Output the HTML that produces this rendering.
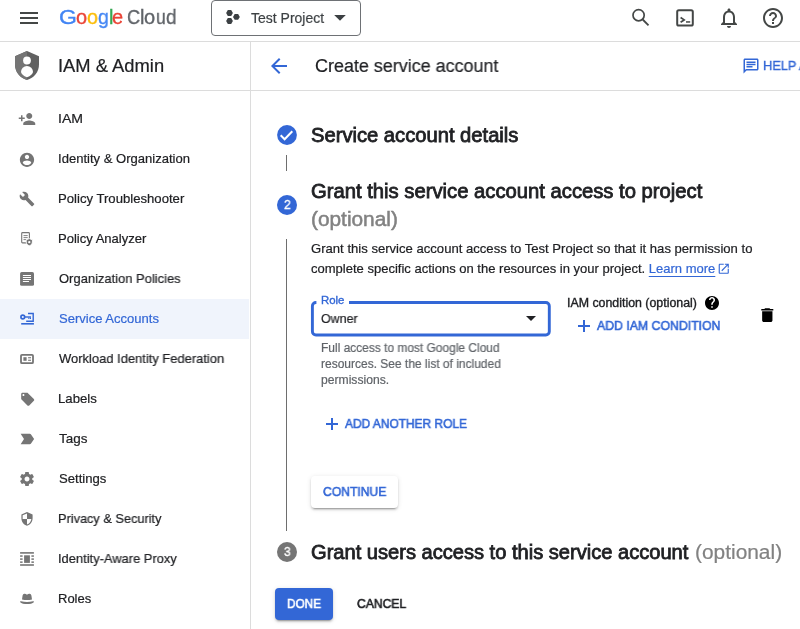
<!DOCTYPE html>
<html>
<head>
<meta charset="utf-8">
<title>Create service account</title>
<style>
*{box-sizing:border-box;margin:0;padding:0}
html,body{width:800px;height:629px;overflow:hidden;background:#fff}
body{font-family:"Liberation Sans",sans-serif;color:#202124;position:relative;font-size:14px}
.abs{position:absolute}
.t{position:absolute;white-space:nowrap;line-height:1;transform-origin:0 0;will-change:transform}
.lt{-webkit-text-stroke:0.2px currentColor}
.med{-webkit-text-stroke:0.35px currentColor}
.btn{-webkit-text-stroke:0.6px currentColor}
.hd{-webkit-text-stroke:0.8px currentColor}
.hd2{-webkit-text-stroke:0.5px currentColor}
#topbar{position:absolute;left:0;top:0;width:800px;height:42px;border-bottom:1px solid #dcdcdc;background:#fff}
#sidebar{position:absolute;left:0;top:42px;width:251px;height:587px;border-right:1px solid #dcdcdc;background:#fff}
#sidehead{position:absolute;left:0;top:0;width:250px;height:49px;border-bottom:1px solid #dcdcdc}
#mainhead{position:absolute;left:251px;top:42px;width:549px;height:49px;border-bottom:1px solid #dcdcdc}
.nav{position:absolute;left:0;width:249px;height:40px}
.nav svg{position:absolute;left:18px;top:11px;width:18px;height:18px;fill:#757575;overflow:visible}
.nav.sel{background:#f0f4fc}
.nav.sel svg{fill:#3367d6}
</style>
</head>
<body>

<!-- TOP BAR -->
<div id="topbar">
  <svg class="abs" style="left:17px;top:6px;width:24px;height:24px" viewBox="0 0 24 24"><path fill="#444746" d="M3 18h18v-2H3v2zm0-5h18v-2H3v2zm0-7v2h18V6H3z"/></svg>
  <div class="abs" style="left:211px;top:0;width:150px;height:36px;border:1px solid #6e7175;border-radius:4px"></div>

  <svg class="abs" style="left:221px;top:9px;width:20px;height:16px" viewBox="221 9 20 16"><g fill="#3c4043"><path d="M226.100 13l1.700-2.900h3.400l1.700 2.900-1.700 2.900h-3.400z"/><path d="M233 16.900l1.700-2.900h3.400l1.700 2.900-1.700 2.900h-3.400z"/><path d="M226.100 21l1.700-2.900h3.400l1.700 2.900-1.700 2.900h-3.400z"/></g></svg>
  <svg class="abs" style="left:334px;top:15px;width:12px;height:6px" viewBox="0 0 12 6"><path d="M0.200 0h11.600L6 5.800z" fill="#3c4043"/></svg>
  <svg class="abs" style="left:629px;top:6px;width:24px;height:24px" viewBox="0 0 24 24"><circle cx="9.600" cy="9.200" r="5.600" fill="none" stroke="#444746" stroke-width="1.700"/><path d="M13.700 13.500l5.800 5.800" stroke="#444746" stroke-width="1.800" fill="none"/></svg>
  <svg class="abs" style="left:673px;top:6px;width:24px;height:24px" viewBox="0 0 24 24"><rect x="4.200" y="4.200" width="15.600" height="15.400" rx="1.600" fill="none" stroke="#444746" stroke-width="2"/><path d="M7.600 11.500l3.600 2.400-3.600 2.400" fill="none" stroke="#444746" stroke-width="1.700"/><path d="M13 15.200h4.200v1.500H13z" fill="#444746"/></svg>
  <svg class="abs" style="left:717px;top:6px;width:24px;height:24px" viewBox="0 0 24 24"><path fill="#444746" d="M12 22c1.100 0 2-.9 2-2h-4c0 1.100.9 2 2 2zm6-6v-5c0-3.070-1.630-5.640-4.500-6.320V4c0-.830-.670-1.500-1.500-1.500s-1.500.670-1.500 1.500v.680C7.640 5.360 6 7.920 6 11v5l-2 2v1h16v-1l-2-2zm-2 1H8v-6c0-2.480 1.510-4.500 4-4.500s4 2.020 4 4.500v6z"/></svg>
  <svg class="abs" style="left:761px;top:6px;width:24px;height:24px" viewBox="0 0 24 24"><path fill="#444746" d="M11 18h2v-2h-2v2zm1-16C6.480 2 2 6.480 2 12s4.480 10 10 10 10-4.480 10-10S17.520 2 12 2zm0 18c-4.410 0-8-3.590-8-8s3.590-8 8-8 8 3.590 8 8-3.590 8-8 8zm0-14c-2.210 0-4 1.790-4 4h2c0-1.100.9-2 2-2s2 .9 2 2c0 2-3 1.750-3 5h2c0-2.250 3-2.500 3-5 0-2.210-1.790-4-4-4z"/></svg>
</div>

<!-- SIDEBAR -->
<div id="sidebar">
  <div id="sidehead">
    <svg class="abs" style="left:15px;top:9px;width:24px;height:29px" viewBox="0 0 24 29"><defs><clipPath id="shl"><rect x="0" y="0" width="12" height="29"/></clipPath></defs><path id="shp" d="M12 0L24 5.300V13.500C24 21 19 27 12 29 5 27 0 21 0 13.500V5.300z" fill="#616161"/><path d="M12 0L24 5.300V13.500C24 21 19 27 12 29 5 27 0 21 0 13.500V5.300z" fill="#757575" clip-path="url(#shl)"/><circle cx="12" cy="9.500" r="3.900" fill="#fff"/><path d="M6 21a6 6 0 0 1 12 0c0 1.700-2.500 4-6 5.300-3.500-1.300-6-3.600-6-5.300z" fill="#fff"/></svg>
  </div>
  <div class="nav" style="top:57px"><svg viewBox="0 0 24 24"><path d="M15 12c2.21 0 4-1.79 4-4s-1.790-4-4-4-4 1.790-4 4 1.790 4 4 4zm-9-2V7H4v3H1v2h3v3h2v-3h3v-2H6zm9 4c-2.670 0-8 1.340-8 4v2h16v-2c0-2.660-5.330-4-8-4z"/></svg></div>
  <div class="nav" style="top:97px"><svg viewBox="0 0 24 24"><g transform="translate(12.00 13.07) scale(0.95) translate(-12 -12)"><path d="M12 2C6.480 2 2 6.480 2 12s4.480 10 10 10 10-4.480 10-10S17.520 2 12 2zm0 3c1.660 0 3 1.340 3 3s-1.340 3-3 3-3-1.340-3-3 1.340-3 3-3zm0 14.200c-2.500 0-4.710-1.280-6-3.220.030-1.990 4-3.080 6-3.080 1.990 0 5.970 1.090 6 3.080-1.290 1.940-3.500 3.220-6 3.220z"/></g></svg></div>
  <div class="nav" style="top:137px"><svg viewBox="0 0 24 24"><g transform="translate(12.00 12.00) scale(0.89) translate(-12 -12)"><path d="M22.700 19l-9.100-9.100c.9-2.300.4-5-1.500-6.900-2-2-5-2.400-7.400-1.300L9 6 6 9 1.600 4.700C.4 7.100.9 10.100 2.900 12.100c1.900 1.900 4.600 2.400 6.900 1.500l9.100 9.100c.4.400 1 .400 1.400 0l2.300-2.300c.5-.4.500-1.100.1-1.400z"/></g></svg></div>
  <div class="nav" style="top:177px"><svg viewBox="18 230 18 18"><rect x="21.700" y="232.6" width="7.700" height="10.300" rx="0.800" fill="none" stroke="#757575" stroke-width="1.100"/>
<path d="M23.500 235.6h4.200M23.500 237.6h4.200M23.500 239.6h2.600" stroke="#757575" stroke-width="0.900" fill="none"/>
<path d="M29.300 238.6l3.100 1.200v2.200c0 1.800-1.300 3.200-3.100 3.800-1.800-.6-3.100-2-3.100-3.800v-2.200z" fill="#757575" stroke="#fff" stroke-width="0.900"/>
<circle cx="29.300" cy="242.2" r="1.150" fill="#fff"/></svg></div>
  <div class="nav" style="top:217px"><svg viewBox="18 270 18 18"><rect x="20.100" y="272.1" width="13.900" height="13.700" rx="1.600"/>
<path d="M22.900 275.5H31M22.900 277.5H31M22.900 279.5H31M22.900 281.5H29" stroke="#fff" stroke-width="1.050" fill="none"/></svg></div>
  <div class="nav sel" style="top:257px"><svg viewBox="18 310 18 18"><g fill="#3367d6"><path fill-rule="evenodd" d="M22.800 314.3a2.700 2.700 0 1 0 0 5.400 2.700 2.700 0 0 0 0-5.400zm0 1.650a1.050 1.050 0 1 1 0 2.100 1.050 1.050 0 0 1 0-2.100z"/>
<rect x="25" y="316.3" width="6" height="1.400"/><rect x="28.300" y="317.6" width="1.100" height="1.400"/><rect x="29.900" y="317.6" width="1.100" height="1.400"/>
<path d="M28 313.5H33.200V321.3H26.200" fill="none" stroke="#3367d6" stroke-width="1.400"/>
<rect x="21.200" y="323" width="12.700" height="1.600"/></g></svg></div>
  <div class="nav" style="top:297px"><svg viewBox="18 350 18 18"><rect x="21" y="354.8" width="12" height="8.400" rx="1" fill="none" stroke="#757575" stroke-width="1.800"/>
<rect x="23.400" y="357.2" width="3.200" height="3.600"/><rect x="28.100" y="357.2" width="2.900" height="1.100"/><rect x="28.100" y="359.7" width="2.900" height="1.100"/></svg></div>
  <div class="nav" style="top:337px"><svg viewBox="0 0 24 24"><g transform="translate(12.93 12.40) scale(0.87) translate(-12 -12)"><path d="M21.410 11.580l-9-9C12.050 2.220 11.550 2 11 2H4c-1.100 0-2 .9-2 2v7c0 .550.220 1.050.590 1.420l9 9c.360.360.860.580 1.410.580s1.050-.220 1.410-.590l7-7c.370-.360.590-.860.590-1.410s-.230-1.060-.590-1.420zM5.500 7C4.670 7 4 6.330 4 5.500S4.670 4 5.500 4 7 4.670 7 5.500 6.330 7 5.500 7z"/></g></svg></div>
  <div class="nav" style="top:377px"><svg viewBox="0 0 24 24"><path d="M3.500 5h12.200c.7 0 1.300.35 1.650.85L21.500 12l-4.150 6.150c-.35.500-.950.850-1.650.850H3.500L8 12 3.500 5z"/></svg></div>
  <div class="nav" style="top:417px"><svg viewBox="0 0 24 24"><g transform="translate(12.00 12.00) scale(0.94) translate(-12 -12)"><path d="M19.430 12.980c.040-.320.070-.640.070-.980s-.030-.660-.070-.980l2.110-1.650c.190-.150.240-.420.120-.640l-2-3.460c-.120-.220-.390-.300-.610-.220l-2.490 1c-.520-.400-1.080-.730-1.690-.980l-.380-2.650C14.460 2.180 14.250 2 14 2h-4c-.250 0-.460.180-.490.420l-.380 2.650c-.610.250-1.170.590-1.690.980l-2.490-1c-.230-.090-.490 0-.610.220l-2 3.460c-.130.220-.070.490.120.640l2.110 1.650c-.040.320-.070.650-.070.980s.030.660.070.980l-2.110 1.650c-.190.150-.240.420-.120.640l2 3.460c.120.220.390.300.610.220l2.490-1c.520.400 1.080.730 1.690.980l.380 2.650c.030.240.240.420.490.420h4c.250 0 .460-.180.490-.420l.380-2.650c.610-.250 1.170-.590 1.690-.980l2.490 1c.230.090.490 0 .610-.220l2-3.460c.120-.220.070-.490-.120-.640l-2.110-1.650zM12 15.500c-1.930 0-3.500-1.570-3.500-3.500s1.570-3.500 3.500-3.500 3.500 1.570 3.500 3.500-1.570 3.500-3.500 3.500z"/></g></svg></div>
  <div class="nav" style="top:457px"><svg viewBox="0 0 24 24"><g transform="translate(12.00 11.87) scale(0.83) translate(-12 -12)"><path d="M12 1L3 5v6c0 5.550 3.840 10.740 9 12 5.160-1.260 9-6.450 9-12V5l-9-4zm0 10.990h7c-.530 4.120-3.280 7.790-7 8.940V12H5V6.300l7-3.110v8.800z"/></g></svg></div>
  <div class="nav" style="top:497px"><svg viewBox="18 550 18 18"><rect x="20.100" y="552.1" width="13.800" height="1.600"/><rect x="20.100" y="564.2" width="13.800" height="1.600"/>
<rect x="24.100" y="555.3" width="5.800" height="7.600"/><rect x="20.1" y="555.3" width="2.500" height="1.500"/><rect x="20.1" y="558.35" width="2.500" height="1.500"/><rect x="20.1" y="561.4" width="2.500" height="1.500"/><rect x="31.4" y="555.3" width="2.500" height="1.500"/><rect x="31.4" y="558.35" width="2.500" height="1.500"/><rect x="31.4" y="561.4" width="2.500" height="1.500"/></svg></div>
  <div class="nav" style="top:537px"><svg viewBox="18 590 18 18"><path d="M22 599.4L22.600 595.5Q23 593.6 24.600 593.8Q26 594 27 594.8Q28 594 29.400 593.8Q31 593.6 31.400 595.5L32 599.4Q27 600.4 22 599.4Z"/>
<path d="M20 601.8Q20 600.9 21 601.2Q27 602.6 33 601.2Q34 600.9 34 601.8Q34 603 31 603.7Q27 604.5 23 603.7Q20 603 20 601.8Z"/></svg></div>
</div>

<!-- MAIN HEADER -->
<div id="mainhead">
  <svg class="abs" style="left:16px;top:12px;width:24px;height:24px" viewBox="0 0 24 24"><path fill="#3367d6" d="M20 11H7.830l5.590-5.590L12 4l-8 8 8 8 1.410-1.410L7.830 13H20v-2z"/></svg>
  <svg class="abs" style="left:491px;top:15px;width:18px;height:18px" viewBox="0 0 24 24"><path fill="#3367d6" d="M4 4h16v12H5.170L4 17.170V4m0-2c-1.100 0-1.990.9-1.990 2L2 22l4-4h14c1.100 0 2-.9 2-2V4c0-1.100-.9-2-2-2H4zm2 10h8v2H6v-2zm0-3h12v2H6V9zm0-3h12v2H6V6z"/></svg>
</div>


<!-- MAIN CONTENT -->
<div id="main">
  <!-- step 1 -->
  <svg class="abs" style="left:277px;top:125px;width:20px;height:20px" viewBox="0 0 20 20"><circle cx="10" cy="10" r="9.900" fill="#3367d6"/><path d="M3.700 10.300l3.900 3.900 7.700-8" fill="none" stroke="#fff" stroke-width="2"/></svg>
  <div class="abs" style="left:286px;top:155px;width:1px;height:16px;background:#6e6e6e"></div>

  <!-- step 2 -->
  <div class="abs" style="left:277px;top:195px;width:20px;height:20px;border-radius:50%;background:#3367d6"></div>
  <div class="abs" style="left:286px;top:239px;width:1px;height:292px;background:#6e6e6e"></div>

  <svg class="abs" style="left:717px;top:262.300px;width:13.500px;height:13.500px" viewBox="0 0 24 24"><path fill="#3367d6" d="M19 19H5V5h7V3H5c-1.110 0-2 .9-2 2v14c0 1.100.890 2 2 2h14c1.100 0 2-.9 2-2v-7h-2v7zM14 3v2h3.590l-9.830 9.830 1.410 1.410L19 6.410V10h2V3h-7z"/></svg>
  <!-- role select -->
  <svg class="abs" style="left:300px;top:290px;width:260px;height:60px" viewBox="300 290 260 60"><path d="M349 302.500H545.800a3.500 3.500 0 0 1 3.500 3.500V331.500a3.500 3.500 0 0 1-3.500 3.500H315.900a3.500 3.500 0 0 1-3.500-3.500V306a3.500 3.500 0 0 1 3.500-3.500H316.400" fill="none" stroke="#3367d6" stroke-width="2.900"/></svg>
  <svg class="abs" style="left:526px;top:316px;width:10px;height:5px" viewBox="0 0 10 5"><path d="M0 0h10L5 5z" fill="#202124"/></svg>

  <!-- IAM condition -->
  <svg class="abs" style="left:705px;top:296px;width:14px;height:14px" viewBox="0 0 24 24"><path fill="#000" d="M12 0C5.400 0 0 5.400 0 12s5.400 12 12 12 12-5.400 12-12S18.600 0 12 0zm1.300 20h-2.600v-2.600h2.600V20zm2.700-10.100l-1.200 1.200c-.900.950-1.500 1.750-1.500 3.700h-2.600v-.65c0-1.450.600-2.750 1.500-3.700l1.600-1.650c.500-.450.750-1.100.750-1.800 0-1.450-1.150-2.600-2.600-2.600S9.400 5.550 9.400 7H6.800c0-2.900 2.350-5.200 5.200-5.200s5.200 2.300 5.200 5.200c0 1.150-.450 2.200-1.200 2.900z"/></svg>
  <svg class="abs" style="left:578px;top:320px;width:12px;height:12px" viewBox="0 0 12 12"><path d="M5 0h2v5h5v2H7v5H5V7H0V5h5z" fill="#3367d6"/></svg>
  <svg class="abs" style="left:756.800px;top:305.900px;width:20.600px;height:18.400px" viewBox="0 0 24 24" preserveAspectRatio="none"><path fill="#000" d="M6 19c0 1.100.9 2 2 2h8c1.100 0 2-.9 2-2V7H6v12zM19 4h-3.500l-1-1h-5l-1 1H5v2h14V4z"/></svg>

  <!-- add another role -->
  <svg class="abs" style="left:326px;top:418px;width:12px;height:12px" viewBox="0 0 12 12"><path d="M5 0h2v5h5v2H7v5H5V7H0V5h5z" fill="#3367d6"/></svg>

  <!-- continue -->
  <div class="abs" style="left:311px;top:476px;width:87px;height:32px;border-radius:4px;background:#fff;box-shadow:0 3px 1px -2px rgba(0,0,0,.2),0 2px 2px 0 rgba(0,0,0,.14),0 1px 5px 0 rgba(0,0,0,.12)"></div>

  <!-- step 3 -->
  <div class="abs" style="left:277px;top:542px;width:20px;height:20px;border-radius:50%;background:#757575"></div>

  <!-- done / cancel -->
  <div class="abs" style="left:275px;top:588px;width:58px;height:32px;border-radius:4px;background:#3367d6;box-shadow:0 3px 1px -2px rgba(0,0,0,.2),0 2px 2px 0 rgba(0,0,0,.14),0 1px 5px 0 rgba(0,0,0,.12)"></div>
</div>

<div id="lg0" class="t med" style="left:59.00px;top:7px;font-size:20px;color:#4285f4;transform:scaleX(1.1487)">G</div>
<div id="lg1" class="t med" style="left:76.00px;top:7px;font-size:20px;color:#ea4335;transform:scaleX(0.9911)">o</div>
<div id="lg2" class="t med" style="left:87.00px;top:7px;font-size:20px;color:#fbbc05;transform:scaleX(0.9801)">o</div>
<div id="lg3" class="t med" style="left:98.00px;top:7px;font-size:20px;color:#4285f4;transform:scaleX(0.9708)">g</div>
<div id="lg4" class="t med" style="left:109.00px;top:7px;font-size:20px;color:#34a853;transform:scaleX(0.9222)">l</div>
<div id="lg5" class="t med" style="left:112.00px;top:7px;font-size:20px;color:#ea4335;transform:scaleX(0.9936)">e</div>
<div id="lg6" class="t med" style="left:127.00px;top:7px;font-size:20px;color:#5f6368;transform:scaleX(0.9055)">C</div>
<div id="lg7" class="t med" style="left:140.00px;top:7px;font-size:20px;color:#5f6368;transform:scaleX(0.9309)">l</div>
<div id="lg8" class="t med" style="left:144.00px;top:7px;font-size:20px;color:#5f6368;transform:scaleX(1.0031)">o</div>
<div id="lg9" class="t med" style="left:156.00px;top:7px;font-size:20px;color:#5f6368;transform:scaleX(0.8736)">u</div>
<div id="lg10" class="t med" style="left:166.00px;top:7px;font-size:20px;color:#5f6368;transform:scaleX(0.9520)">d</div>
<div id="t0" class="t lt" style="left:251.00px;top:11px;font-size:14px;color:#3c4043;transform:scaleX(0.9986)">Test Project</div>
<div id="t1" class="t lt" style="left:58.00px;top:57px;font-size:18px;color:#202124;transform:scaleX(1.0197)">IAM &amp; Admin</div>
<div id="t2" class="t lt" style="left:315.00px;top:57px;font-size:18px;color:#202124;transform:scaleX(0.9967)">Create service account</div>
<div id="hp" class="t med" style="left:763.00px;top:59px;font-size:13px;color:#3367d6;transform:scaleX(0.9827)">HELP ASSISTANT</div>
<div id="n0" class="t lt" style="left:58.00px;top:112px;font-size:13px;color:#202124;transform:scaleX(1.0820)">IAM</div>
<div id="n1" class="t lt" style="left:58.00px;top:152px;font-size:13px;color:#202124;transform:scaleX(1.0038)">Identity &amp; Organization</div>
<div id="n2" class="t lt" style="left:58.00px;top:192px;font-size:13px;color:#202124;transform:scaleX(1.0101)">Policy Troubleshooter</div>
<div id="n3" class="t lt" style="left:58.00px;top:232px;font-size:13px;color:#202124;transform:scaleX(1.0028)">Policy Analyzer</div>
<div id="n4" class="t lt" style="left:59.00px;top:272px;font-size:13px;color:#202124;transform:scaleX(0.9959)">Organization Policies</div>
<div id="n5" class="t lt" style="left:59.00px;top:312px;font-size:13px;color:#3367d6;transform:scaleX(1.0025)">Service Accounts</div>
<div id="n6" class="t lt" style="left:59.00px;top:352px;font-size:13px;color:#202124;transform:scaleX(0.9955)">Workload Identity Federation</div>
<div id="n7" class="t lt" style="left:58.00px;top:392px;font-size:13px;color:#202124;transform:scaleX(1.0132)">Labels</div>
<div id="n8" class="t lt" style="left:59.00px;top:432px;font-size:13px;color:#202124;transform:scaleX(1.0336)">Tags</div>
<div id="n9" class="t lt" style="left:59.00px;top:472px;font-size:13px;color:#202124;transform:scaleX(1.0087)">Settings</div>
<div id="n10" class="t lt" style="left:58.00px;top:512px;font-size:13px;color:#202124;transform:scaleX(0.9808)">Privacy &amp; Security</div>
<div id="n11" class="t lt" style="left:58.00px;top:552px;font-size:13px;color:#202124;transform:scaleX(0.9920)">Identity-Aware Proxy</div>
<div id="n12" class="t lt" style="left:58.00px;top:592px;font-size:13px;color:#202124;transform:scaleX(0.9935)">Roles</div>
<div id="s1" class="t hd" style="left:311.00px;top:125px;font-size:20px;color:#202124;transform:scaleX(1.0085)">Service account details</div>
<div id="s2" class="t hd" style="left:311.00px;top:181px;font-size:20px;color:#202124;transform:scaleX(1.0116)">Grant this service account access to project</div>
<div id="s2b" class="t hd2" style="left:311.00px;top:209px;font-size:20px;color:#828282;transform:scaleX(1.0417)">(optional)</div>
<div id="d1" class="t lt" style="left:311.00px;top:242px;font-size:13px;color:#202124;transform:scaleX(1.0070)">Grant this service account access to Test Project so that it has permission to</div>
<div id="d2" class="t lt" style="left:311.00px;top:262px;font-size:13px;color:#202124;transform:scaleX(1.0009)">complete specific actions on the resources in your project. <span style="color:#3367d6;text-decoration:underline;text-underline-offset:3px">Learn more</span></div>
<div id="rl" class="t med" style="left:321.00px;top:295px;font-size:11px;color:#3367d6;transform:scaleX(1.0356)">Role</div>
<div id="ow" class="t lt" style="left:321.00px;top:312px;font-size:13px;color:#202124;transform:scaleX(0.9564)">Owner</div>
<div id="h1" class="t lt" style="left:321.00px;top:342px;font-size:12px;color:#5f6368;transform:scaleX(0.9955)">Full access to most Google Cloud</div>
<div id="h2" class="t lt" style="left:321.00px;top:358px;font-size:12px;color:#5f6368;transform:scaleX(0.9983)">resources. See the list of included</div>
<div id="h3" class="t lt" style="left:321.00px;top:374px;font-size:12px;color:#5f6368;transform:scaleX(1.0107)">permissions.</div>
<div id="ic" class="t med" style="left:567.00px;top:297px;font-size:12px;color:#202124;transform:scaleX(1.0306)">IAM condition (optional)</div>
<div id="aic" class="t btn" style="left:597.00px;top:319px;font-size:13px;color:#3367d6;transform:scaleX(0.9443)">ADD IAM CONDITION</div>
<div id="aar" class="t btn" style="left:345.00px;top:417px;font-size:13px;color:#3367d6;transform:scaleX(0.9177)">ADD ANOTHER ROLE</div>
<div id="co" class="t btn" style="left:323.00px;top:485px;font-size:13px;color:#3367d6;transform:scaleX(0.9331)">CONTINUE</div>
<div id="s3" class="t hd" style="left:311.00px;top:542px;font-size:20px;color:#202124;transform:scaleX(1.0044)">Grant users access to this service account</div>
<div id="s3b" class="t lt" style="left:695.00px;top:542px;font-size:20px;color:#828282;transform:scaleX(1.0445)">(optional)</div>
<div id="dn" class="t btn" style="left:287.00px;top:597px;font-size:13px;color:#fff;transform:scaleX(0.9043)">DONE</div>
<div id="cn" class="t btn" style="left:357.00px;top:597px;font-size:13px;color:#202124;transform:scaleX(0.9320)">CANCEL</div>
<div id="t3" class="t med" style="left:284.00px;top:198px;font-size:13px;color:#fff;transform:scaleX(0.9362)">2</div>
<div id="t4" class="t med" style="left:284.00px;top:545px;font-size:13px;color:#fff;transform:scaleX(0.9173)">3</div>
</body>
</html>
